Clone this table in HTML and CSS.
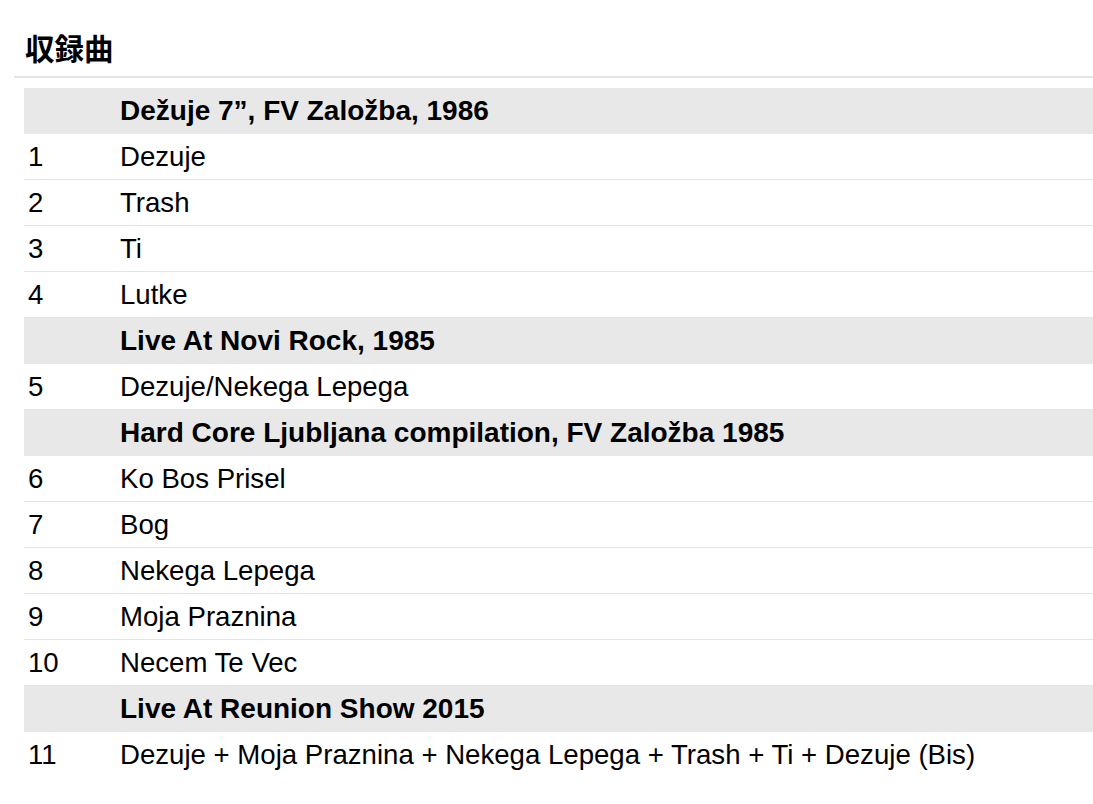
FILE: index.html
```html
<!DOCTYPE html>
<html lang="ja">
<head>
<meta charset="utf-8">
<link rel="stylesheet" href="styles.css">
</head>
<body>
<section class="tracks">
  <h2 class="tracks-title">収録曲</h2>
  <table class="tracklist">
    <tbody>
      <tr class="group"><td class="num"></td><td class="title">Dežuje 7”, FV Založba, 1986</td></tr>
      <tr><td class="num">1</td><td class="title">Dezuje</td></tr>
      <tr><td class="num">2</td><td class="title">Trash</td></tr>
      <tr><td class="num">3</td><td class="title">Ti</td></tr>
      <tr><td class="num">4</td><td class="title">Lutke</td></tr>
      <tr class="group"><td class="num"></td><td class="title">Live At Novi Rock, 1985</td></tr>
      <tr><td class="num">5</td><td class="title">Dezuje/Nekega Lepega</td></tr>
      <tr class="group"><td class="num"></td><td class="title">Hard Core Ljubljana compilation, FV Založba 1985</td></tr>
      <tr><td class="num">6</td><td class="title">Ko Bos Prisel</td></tr>
      <tr><td class="num">7</td><td class="title">Bog</td></tr>
      <tr><td class="num">8</td><td class="title">Nekega Lepega</td></tr>
      <tr><td class="num">9</td><td class="title">Moja Praznina</td></tr>
      <tr><td class="num">10</td><td class="title">Necem Te Vec</td></tr>
      <tr class="group"><td class="num"></td><td class="title">Live At Reunion Show 2015</td></tr>
      <tr class="last"><td class="num">11</td><td class="title">Dezuje + Moja Praznina + Nekega Lepega + Trash + Ti + Dezuje (Bis)</td></tr>
    </tbody>
  </table>
</section>
</body>
</html>
```

FILE: styles.css
```css
html, body {
  margin: 0;
  padding: 0;
  background: #ffffff;
  color: #000000;
  font-family: "Liberation Sans", Arial, "Noto Sans CJK JP", sans-serif;
}

.tracks {
  padding-left: 14px;
}

.tracks-title {
  margin: 0;
  padding: 29px 0 0 11px;
  height: 47px;
  box-sizing: content-box;
  font-family: "Noto Sans CJK JP", sans-serif;
  font-size: 29.5px;
  font-weight: 700;
  line-height: 36px;
  border-bottom: 2px solid #e6e6e6;
}

.tracklist {
  margin: 10px 0 0 10px;
  width: calc(100% - 10px);
  border-collapse: collapse;
  font-size: 27.6px;
}

.tracklist td {
  height: 45px;
  padding: 0 5px;
  vertical-align: middle;
  border-bottom: 1px solid #e4e4e4;
  line-height: 30px;
  white-space: nowrap;
}

.tracklist .num {
  width: 81px;
  padding-left: 4px;
  padding-right: 6px;
}

.tracklist .group td {
  background: #e8e8e8;
  font-size: 28px;
  font-weight: 700;
  border-bottom-color: #e8e8e8;
}

.tracklist .last td {
  border-bottom: none;
}
```
